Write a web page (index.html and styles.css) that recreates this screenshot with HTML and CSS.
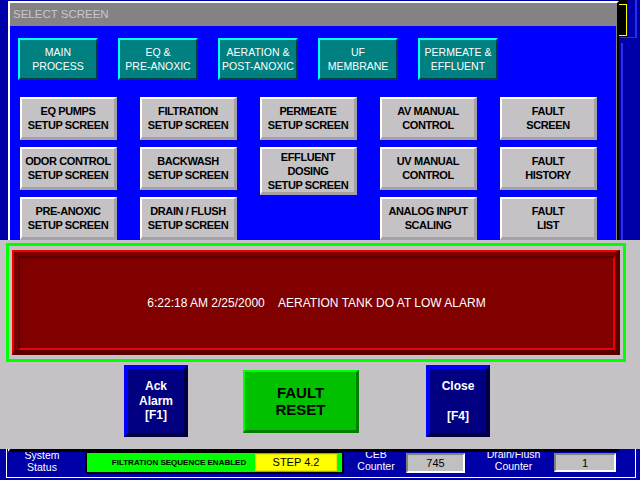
FILE: index.html
```html
<!DOCTYPE html>
<html>
<head>
<meta charset="utf-8">
<title>Select Screen</title>
<link rel="stylesheet" href="styles.css">
</head>
<body>
<div class="desktop">
  <div class="hmi-tag"><div class="hmi-tag-edge"></div></div>
  <div class="hmi-line-a"></div>
  <div class="hmi-line-b"></div>

  <div class="statusbar">
    <div class="label label-system">System<br>Status</div>
    <div class="seq">
      <div class="seq-text">FILTRATION SEQUENCE ENABLED</div>
      <div class="step">STEP 4.2</div>
    </div>
    <div class="label label-ceb">CEB<br>Counter</div>
    <div class="counter counter-ceb">745</div>
    <div class="label label-drain">Drain/Flush<br>Counter</div>
    <div class="counter counter-drain">1</div>
  </div>

  <div class="select-window">
    <div class="titlebar">SELECT SCREEN</div>
    <div class="window-body">
      <div class="area-row">
        <div class="btn-area">MAIN<br>PROCESS</div>
        <div class="btn-area">EQ &amp;<br>PRE-ANOXIC</div>
        <div class="btn-area">AERATION &amp;<br>POST-ANOXIC</div>
        <div class="btn-area">UF<br>MEMBRANE</div>
        <div class="btn-area">PERMEATE &amp;<br>EFFLUENT</div>
      </div>
      <div class="setup-grid">
        <div class="btn-setup">EQ PUMPS<br>SETUP SCREEN</div>
        <div class="btn-setup">FILTRATION<br>SETUP SCREEN</div>
        <div class="btn-setup">PERMEATE<br>SETUP SCREEN</div>
        <div class="btn-setup">AV MANUAL<br>CONTROL</div>
        <div class="btn-setup">FAULT<br>SCREEN</div>

        <div class="btn-setup">ODOR CONTROL<br>SETUP SCREEN</div>
        <div class="btn-setup">BACKWASH<br>SETUP SCREEN</div>
        <div class="btn-setup btn-tall">EFFLUENT<br>DOSING<br>SETUP SCREEN</div>
        <div class="btn-setup">UV MANUAL<br>CONTROL</div>
        <div class="btn-setup">FAULT<br>HISTORY</div>

        <div class="btn-setup">PRE-ANOXIC<br>SETUP SCREEN</div>
        <div class="btn-setup">DRAIN / FLUSH<br>SETUP SCREEN</div>
        <div class="grid-empty"></div>
        <div class="btn-setup">ANALOG INPUT<br>SCALING</div>
        <div class="btn-setup">FAULT<br>LIST</div>
      </div>
    </div>
  </div>

  <div class="alarm-dialog">
    <div class="alarm-frame">
      <div class="alarm-outer">
        <div class="alarm-inner">6:22:18 AM 2/25/2000&nbsp;&nbsp;&nbsp;&nbsp;AERATION TANK DO AT LOW ALARM</div>
      </div>
    </div>
    <div class="alarm-actions">
      <div class="btn-nav btn-ack">Ack<br>Alarm<br>[F1]</div>
      <div class="btn-reset">FAULT<br>RESET</div>
      <div class="btn-nav btn-close">Close<br><br>[F4]</div>
    </div>
  </div>
</div>
</body>
</html>
```

FILE: styles.css
```css
* { box-sizing: border-box; }
html, body { margin: 0; padding: 0; }
body {
  width: 640px;
  height: 480px;
  overflow: hidden;
  background: #0000a8;
  font-family: "Liberation Sans", Arial, sans-serif;
}
.desktop { position: relative; width: 640px; height: 480px; }

/* background HMI bits peeking on the right */
.hmi-tag {
  position: absolute; left: 617px; top: 0; width: 10px; height: 37px; background: #000;
}
.hmi-tag-edge {
  position: absolute; left: 2px; top: 4px; width: 8px; height: 32px;
  border: 1px solid #ffff00; border-left: none;
}
.hmi-line-a {
  position: absolute; left: 620px; top: 0; width: 17px; height: 38px;
  border-right: 2px solid #2c2cf0; border-bottom: 1px solid #2c2cf0;
}
.hmi-line-b {
  position: absolute; left: 621px; top: 43px; width: 2px; height: 200px; background: #2c2cf0;
}

/* bottom status bar */
.statusbar {
  position: absolute; left: 6px; top: 440px; width: 630px; height: 38px;
  border: 1px solid #fff; border-top: none;
  display: flex; align-items: center; padding-top: 8px;
  color: #fff;
}
.label { font-size: 10.5px; line-height: 11.5px; text-align: center; white-space: nowrap; }
.label-system { width: 70px; margin-bottom: 2px; }
.label-ceb { width: 50px; margin-left: 7px; margin-bottom: 4px; }
.label-drain { width: 77px; margin-left: 10px; margin-bottom: 4px; }
.seq {
  margin-left: 8px; width: 259px; height: 23px;
  border: 2px solid #000; background: #00ff00;
  display: flex; align-items: center; padding-right: 5px; color: #000;
}
.seq-text {
  flex: 1; padding-left: 16px; text-align: center;
  font-size: 8px; font-weight: bold; white-space: nowrap;
}
.step {
  width: 82px; height: 17px; background: #ffff00; border: 1px solid #e8e800;
  font-size: 11px; line-height: 15px; text-align: center;
}
.counter {
  height: 20px; background: #c0c0c0; color: #000;
  border: 2px solid; border-color: #808080 #ffffff #ffffff #808080;
  font-size: 11px; display: flex; align-items: center; justify-content: center;
}
.counter-ceb { width: 59px; margin-left: 5px; }
.counter-drain { width: 62px; margin-left: 2px; height: 19px; }

/* select screen window */
.select-window {
  position: absolute; left: 8px; top: 1px; width: 611px; height: 451px;
  border-left: 2px solid #fff; border-top: 2px solid #fff;
  border-right: 2px solid #000; border-bottom: 3px solid #000;
  display: flex; flex-direction: column; background: #0000ff;
}
.titlebar {
  height: 23px; background: #848284; color: #c8c8c8;
  font-size: 11.5px; line-height: 23px; padding-left: 3px;
}
.window-body {
  flex: 1; border-right: 1px solid #808080;
  padding: 12px 0 0 8px;
}
.area-row { display: flex; gap: 20px; }
.btn-area {
  width: 80px; height: 42px; background: #008080; color: #fff;
  border: 2px solid; border-color: #00ffff #004040 #004040 #00ffff;
  font-size: 10.5px; line-height: 14px; text-align: center;
  display: flex; align-items: center; justify-content: center; white-space: nowrap;
}
.setup-grid {
  margin: 17px 0 0 2px;
  display: grid; grid-template-columns: repeat(5, 97px);
  grid-auto-rows: 43px; column-gap: 23px; row-gap: 7px; align-items: start;
}
.btn-setup {
  height: 43px; background: #c4c2c4; color: #000;
  border-style: solid; border-width: 2px 3px 3px 2px;
  border-color: #ffffff #a4a2a4 #a4a2a4 #ffffff;
  font-size: 11px; font-weight: bold; letter-spacing: -0.4px; line-height: 14px;
  text-align: center; white-space: nowrap;
  display: flex; align-items: center; justify-content: center;
}
.btn-tall { height: 48px; }

/* alarm dialog */
.alarm-dialog {
  position: absolute; left: 0; top: 240px; width: 640px; height: 209px;
  background: #c4c2c4; padding: 3px 0 0 6px;
}
.alarm-frame {
  width: 620px; height: 119px; border: 3px solid #00ff00; padding: 4px 3px;
}
.alarm-outer {
  height: 100%; background: #800000;
  border-style: solid; border-width: 2px 5px 5px 2px;
  border-color: #f00000 #580000 #580000 #f00000;
  padding: 4px 0 0 4px;
}
.alarm-inner {
  height: 100%; background: #800000; color: #fff;
  border: 2px solid; border-color: #580000 #f00000 #f00000 #580000;
  font-size: 12px; white-space: nowrap;
  display: flex; align-items: center; justify-content: center;
}
.alarm-actions { margin-top: 3px; display: flex; align-items: center; }
.btn-nav {
  width: 64px; height: 72px; background: #000080; color: #fff;
  border: 4px solid; border-color: #0000ff #000040 #000040 #0000ff;
  font-size: 12px; font-weight: bold; line-height: 14.5px; text-align: center;
  display: flex; align-items: center; justify-content: center;
}
.btn-ack { margin-left: 118px; }
.btn-close { margin-left: 67px; line-height: 15px; }
.btn-reset {
  margin-left: 55px; width: 116px; height: 63px;
  background: #00c000; color: #000;
  border-style: solid; border-width: 2px 3px 3px 2px;
  border-color: #00ff00 #008000 #008000 #00ff00;
  font-size: 15px; font-weight: bold; line-height: 17px; text-align: center;
  display: flex; align-items: center; justify-content: center;
}
```
